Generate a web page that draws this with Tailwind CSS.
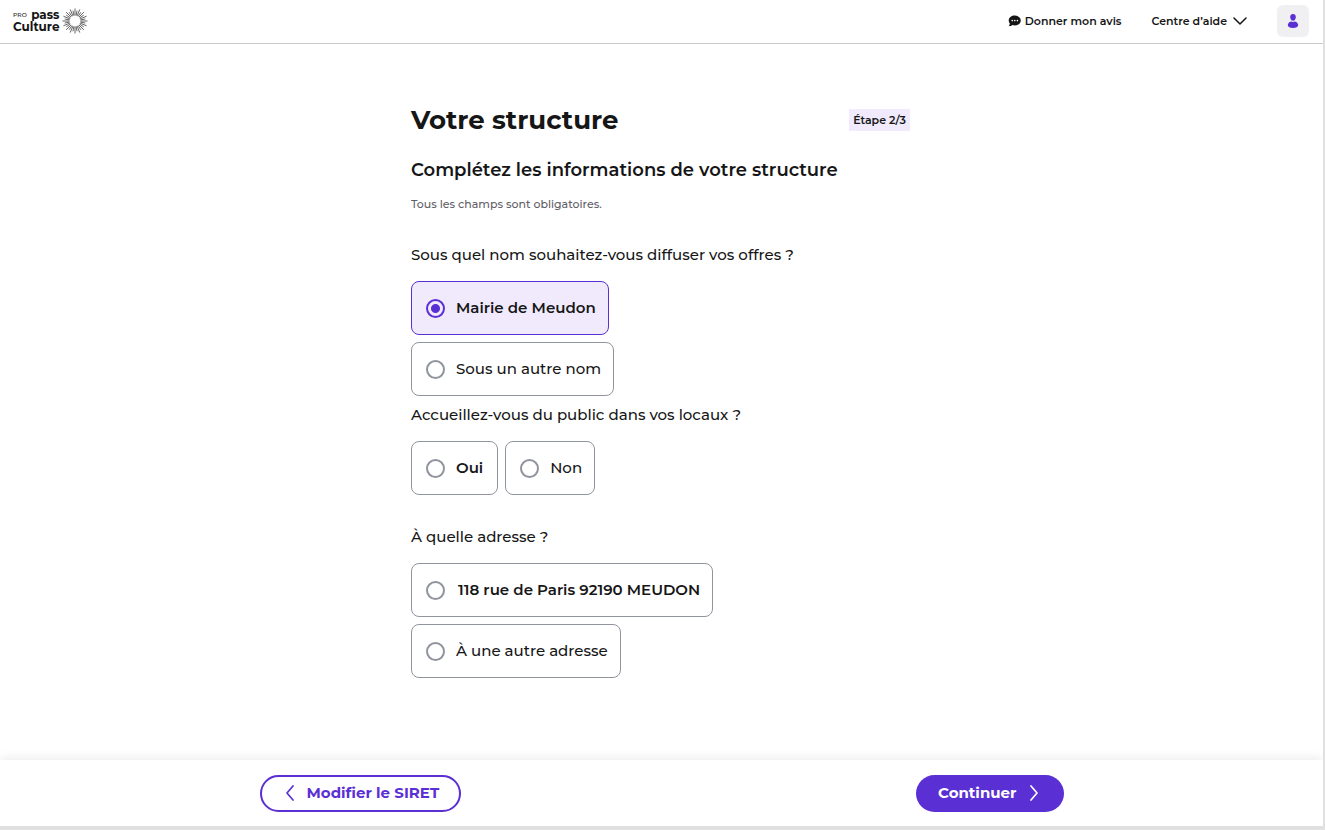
<!DOCTYPE html>
<html lang="fr">
<head>
  <meta charset="UTF-8" />
  <meta name="viewport" content="width=device-width, initial-scale=1.0" />
  <title>Votre structure - pass Culture Pro</title>
  <script src="https://cdn.jsdelivr.net/npm/@tailwindcss/browser@4"></script>
</head>
<body class="min-h-screen flex flex-col bg-white border-r-2 border-b-4 border-[#e0e0e0] font-[Montserrat,Inter,sans-serif] text-[#161617]">

  <header class="flex items-center justify-between h-11 pl-[13px] pr-3.5 pb-px border-b border-[#cbcbcb]">
    <a href="#" class="flex items-center gap-0.5" aria-label="pass Culture Pro">
      <span class="block text-[12px] leading-3 font-bold">
        <span class="flex items-center justify-between"><span class="text-[6px] leading-[6px] font-medium">PRO</span><span>pass</span></span>
        <span class="block">Culture</span>
      </span>
      <svg id="sun" class="size-[26px]" viewBox="-13 -13 26 26" fill="none" stroke="#222" stroke-width=".7"></svg>
    </a>
    <nav class="flex items-center text-[11px] font-semibold">
      <a href="#" class="flex items-center gap-1 mr-[30px]">
        <svg class="w-[13px] h-3" viewBox="0 0 13 12">
          <path fill="#161617" d="M6.900.6c3.400 0 5.900 2.100 5.900 4.900s-2.500 4.900-5.900 4.900c-.9 0-1.700-.1-2.400-.4-.9.800-2.200 1.200-3.900 1.200.8-.8 1.200-1.700 1.200-2.700C1 7.600.7 6.600.7 5.500.7 2.700 3.500.6 6.900.6z"/>
          <circle cx="4.200" cy="5.600" r=".8" fill="#fff"/><circle cx="6.800" cy="5.600" r=".8" fill="#fff"/><circle cx="9.400" cy="5.600" r=".8" fill="#fff"/>
        </svg>
        Donner mon avis
      </a>
      <button type="button" class="flex items-center gap-1.5 mr-[30px]">
        Centre d’aide
        <svg class="w-3.5 h-2" viewBox="0 0 14 8" fill="none" stroke="#161617" stroke-width="1.500" stroke-linecap="round" stroke-linejoin="round"><path d="M1 1l6 6 6-6"/></svg>
      </button>
      <button type="button" aria-label="Profil" class="flex items-center justify-center size-8 rounded-md bg-[#f0f0f2]">
        <svg class="w-3 h-3.5" viewBox="0 0 12 14" fill="#5a2fd4">
          <path d="M6 0c1.800 0 2.800 1.200 2.800 3S7.800 6.800 6 6.800 3.200 4.800 3.200 3 4.200 0 6 0z"/>
          <path d="M3.900 7.500c1.300.6 2.900.6 4.200 0 1.800.6 3.100 2 3.100 3.600 0 1.900-2.200 2.900-5.200 2.900S.8 13 .8 11.100c0-1.600 1.300-3 3.100-3.600z"/>
        </svg>
      </button>
    </nav>
  </header>

  <main class="grow w-full max-w-[501px] mx-auto pr-0.5 pt-[60px]">
    <div class="flex items-center justify-between">
      <h1 class="text-[26px] leading-8 font-bold">Votre structure</h1>
      <span class="bg-[#f1eafc] px-1 py-0.5 text-[11px] leading-[18px] font-semibold">Étape 2/3</span>
    </div>
    <h2 class="mt-5 text-[18px] leading-7 font-semibold">Complétez les informations de votre structure</h2>
    <p class="mt-3 text-[11px] leading-4 font-medium text-[#5f6066]">Tous les champs sont obligatoires.</p>

    <form id="structure" class="text-[15px] font-medium">
      <fieldset class="mt-[31px]">
        <legend class="mb-3.5 leading-6">Sous quel nom souhaitez-vous diffuser vos offres ?</legend>
        <div class="flex flex-col items-start gap-[7px]">
          <label class="flex items-center gap-[11px] h-[54px] pl-3.5 pr-3 border border-[#90949d] rounded-lg has-checked:border-[#5a2fd4] has-checked:bg-[#f1eafc] font-semibold">
            <input type="radio" name="nom" checked class="appearance-none size-[19px] rounded-full border-2 border-[#90949d] checked:border-[#5a2fd4] checked:bg-[radial-gradient(circle,#5a2fd4_0_4px,transparent_5px)]">
            Mairie de Meudon
          </label>
          <label class="flex items-center gap-[11px] h-[54px] pl-3.5 pr-3 border border-[#90949d] rounded-lg">
            <input type="radio" name="nom" class="appearance-none size-[19px] rounded-full border-2 border-[#90949d]">
            Sous un autre nom
          </label>
        </div>
      </fieldset>

      <fieldset class="mt-[7px]">
        <legend class="mb-3.5 leading-6">Accueillez-vous du public dans vos locaux ?</legend>
        <div class="flex items-start gap-[7px]">
          <label class="flex items-center gap-[11px] h-[54px] px-3.5 border border-[#90949d] rounded-lg font-semibold">
            <input type="radio" name="public" class="appearance-none size-[19px] rounded-full border-2 border-[#90949d]">
            Oui
          </label>
          <label class="flex items-center gap-[11px] h-[54px] pl-3.5 pr-3 border border-[#90949d] rounded-lg">
            <input type="radio" name="public" class="appearance-none size-[19px] rounded-full border-2 border-[#90949d]">
            Non
          </label>
        </div>
      </fieldset>

      <fieldset class="mt-[30px]">
        <legend class="mb-3.5 leading-6">À quelle adresse ?</legend>
        <div class="flex flex-col items-start gap-[7px]">
          <label class="flex items-center gap-[11px] h-[54px] pl-3.5 pr-3 border border-[#90949d] rounded-lg font-semibold">
            <input type="radio" name="adresse" class="appearance-none size-[19px] rounded-full border-2 border-[#90949d]">
            <span class="pl-0.5">118 rue de Paris 92190 MEUDON</span>
          </label>
          <label class="flex items-center gap-[11px] h-[54px] pl-3.5 pr-3 border border-[#90949d] rounded-lg">
            <input type="radio" name="adresse" class="appearance-none size-[19px] rounded-full border-2 border-[#90949d]">
            À une autre adresse
          </label>
        </div>
      </fieldset>
    </form>
  </main>

  <footer class="h-[66px] shadow-[0_-2px_10px_rgba(0,0,0,0.08)]">
    <div class="flex items-center justify-between w-full max-w-[804px] h-full mx-auto text-[15px] font-bold">
      <button type="button" class="flex items-center gap-3 h-[37px] pl-[23px] pr-5 border-2 border-[#5a2fd4] rounded-full text-[#5a2fd4]">
        <svg class="w-2.5 h-4" viewBox="0 0 10 16" fill="none" stroke="currentColor" stroke-width="1.700" stroke-linecap="round" stroke-linejoin="round"><path d="M8 1L2 8l6 7"/></svg>
        Modifier le SIRET
      </button>
      <button type="submit" form="structure" class="flex items-center gap-3 h-[37px] pl-[22px] pr-[25px] rounded-full bg-[#5a2fd4] text-white">
        Continuer
        <svg class="w-2.5 h-4" viewBox="0 0 10 16" fill="none" stroke="currentColor" stroke-width="1.700" stroke-linecap="round" stroke-linejoin="round"><path d="M2 1l6 7-6 7"/></svg>
      </button>
    </div>
  </footer>

  <script>
    // rays of the logo, long and short ones alternate
    let d = '';
    for (let i = 0; i < 32; i++) {
      const a = i * Math.PI / 16;
      const r = i % 2 ? 10.5 : 12.5;
      d += `M${Math.cos(a) * 5.5} ${Math.sin(a) * 5.5}L${Math.cos(a) * r} ${Math.sin(a) * r}`;
    }
    document.getElementById('sun').innerHTML = `<path d="${d}"/>`;
  </script>
</body>
</html>
